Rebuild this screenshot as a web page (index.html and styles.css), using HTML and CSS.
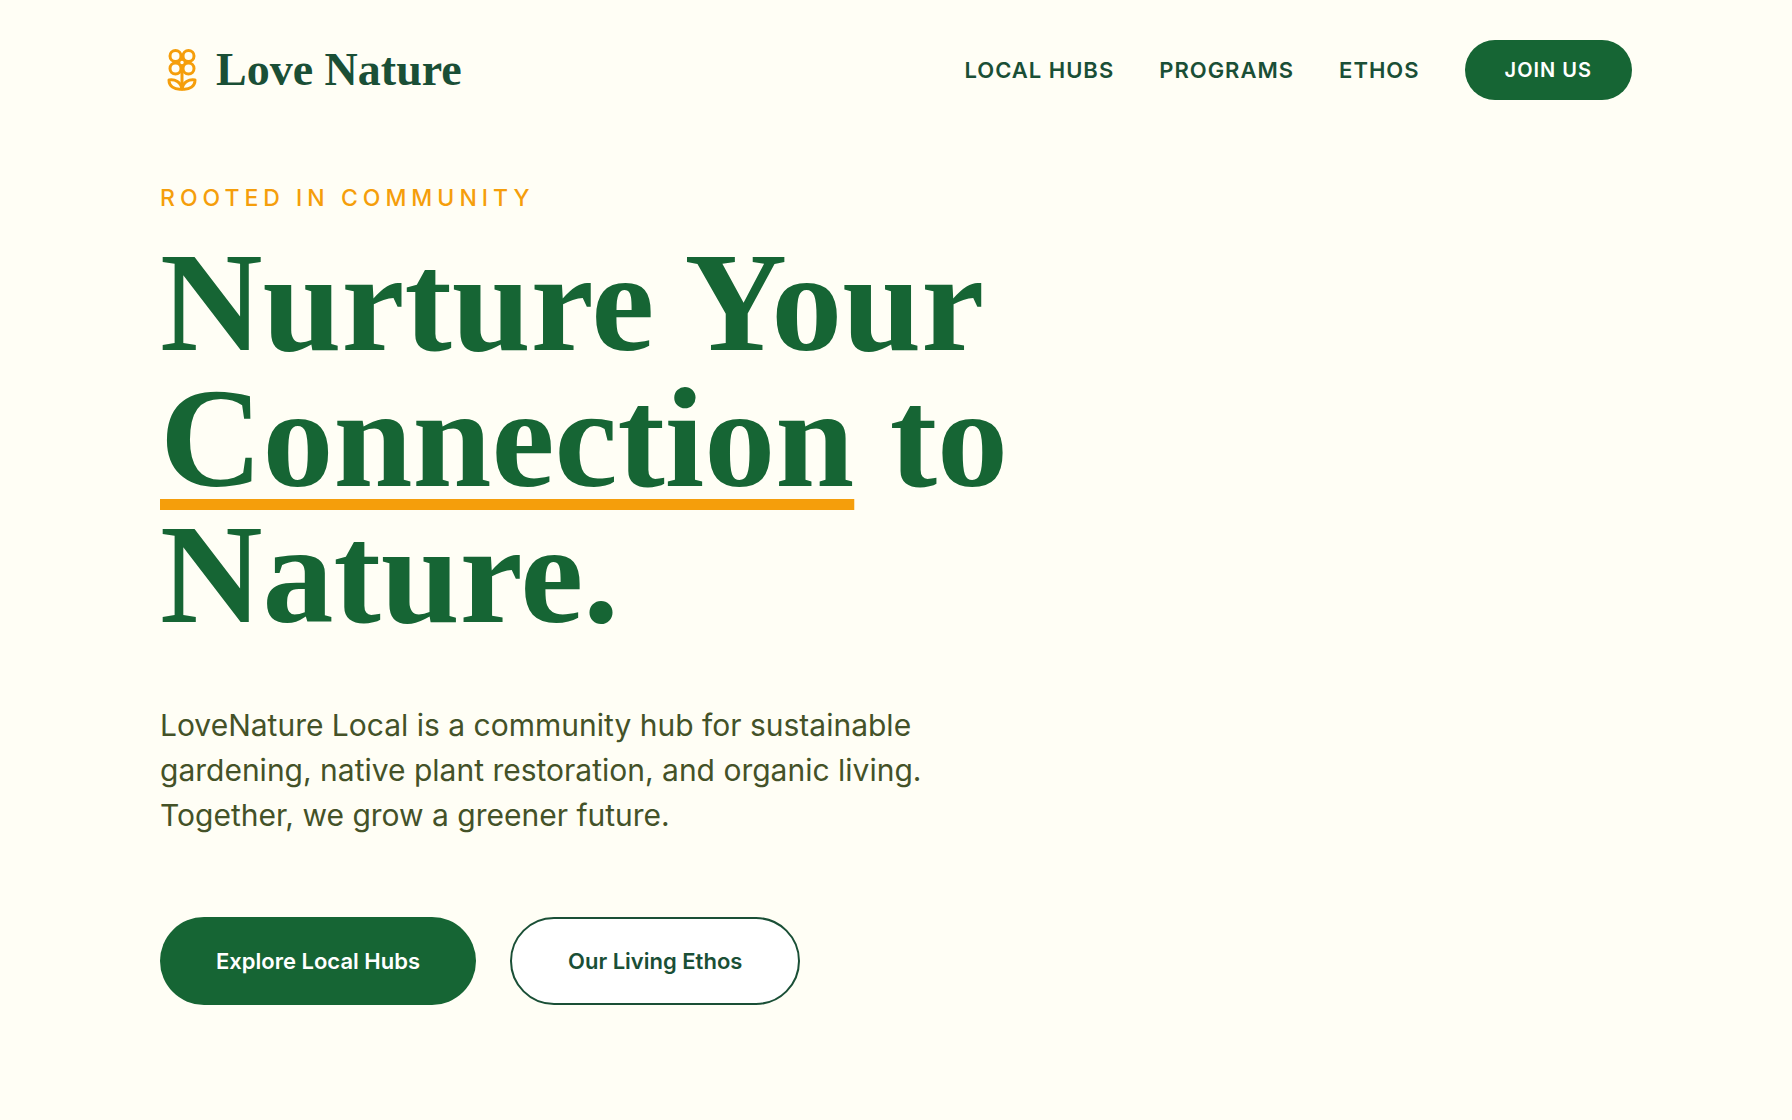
FILE: index.html
```
<!DOCTYPE html>
<html lang="en">
<head>
  <meta charset="UTF-8">
  <meta name="viewport" content="width=device-width, initial-scale=1.0">
  <title>Love Nature</title>
  <link rel="stylesheet" href="styles.css">
</head>
<body>
  <header class="header">
    <a href="#" class="logo">
      <svg class="logo-icon" viewBox="0 0 44 44" fill="none" stroke="currentColor" stroke-width="3" stroke-linecap="round" stroke-linejoin="round" aria-hidden="true">
        <circle cx="15.5" cy="8" r="5.5"/>
        <circle cx="28.5" cy="8" r="5.5"/>
        <circle cx="15.5" cy="20.5" r="5.5"/>
        <circle cx="28.5" cy="20.5" r="5.5"/>
        <circle cx="22" cy="14.5" r="3" fill="#fffef5" stroke-width="2.5"/>
        <path d="M22 22v19"/>
        <path d="M22 41C14 42 9 38 9 32c6-1 12 2 13 9z"/>
        <path d="M22 41c8 1 13-3 13-9-6-1-12 2-13 9z"/>
      </svg>
      <span>Love Nature</span>
    </a>
    <nav class="nav">
      <a href="#hubs">LOCAL HUBS</a>
      <a href="#programs">PROGRAMS</a>
      <a href="#ethos">ETHOS</a>
      <button class="btn-join">JOIN US</button>
    </nav>
  </header>

  <main class="hero">
    <p class="eyebrow">ROOTED IN COMMUNITY</p>
    <h1>Nurture Your <span class="underline">Connection</span> to Nature.</h1>
    <p class="description">LoveNature Local is a community hub for sustainable gardening, native plant restoration, and organic living. Together, we grow a greener future.</p>
    <div class="actions">
      <button class="btn btn-primary">Explore Local Hubs</button>
      <button class="btn btn-outline">Our Living Ethos</button>
    </div>
  </main>
</body>
</html>
```
FILE: styles.css
```
:root {
  --bg-color: #fffef5;
  --green: #166534;
  --dark-green: #1a4f36;
  --amber: #f59e0b;
  --olive: #445228;
  --serif: "Liberation Serif", "Times New Roman", serif;
  --sans: Inter, "Open Sans", sans-serif;
}

* {
  margin: 0;
  padding: 0;
  box-sizing: border-box;
}

body {
  font-family: var(--sans);
  background-color: var(--bg-color);
  color: var(--green);
  min-height: 100vh;
  padding: 40px 160px;
}

.header {
  display: flex;
  justify-content: space-between;
  align-items: center;
}

.logo {
  display: flex;
  align-items: center;
  gap: 12px;
  font-family: var(--serif);
  font-size: 46px;
  font-weight: 700;
  line-height: 60px;
  color: var(--dark-green);
  text-decoration: none;
}

.logo-icon {
  width: 44px;
  height: 44px;
  color: var(--amber);
}

.nav {
  display: flex;
  align-items: center;
  gap: 45px;
}

.nav a {
  color: var(--dark-green);
  font-size: 22px;
  font-weight: 600;
  letter-spacing: 1px;
  text-decoration: none;
}

button {
  font-family: inherit;
  font-size: 22px;
  font-weight: 600;
  border: none;
  cursor: pointer;
}

.btn-join {
  padding: 0 40px;
  height: 60px;
  border-radius: 30px;
  background-color: var(--green);
  color: #fff;
  font-size: 20px;
  letter-spacing: 1px;
}

.hero {
  padding-top: 82px;
}

.eyebrow {
  color: var(--amber);
  font-size: 23px;
  font-weight: 500;
  line-height: 32px;
  letter-spacing: 5px;
}

h1 {
  max-width: 900px;
  margin-top: 20px;
  font-family: var(--serif);
  font-size: 142px;
  font-weight: 700;
  line-height: 136px;
}

.underline {
  text-decoration: underline;
  text-decoration-color: var(--amber);
  text-decoration-thickness: 11px;
  text-underline-offset: 13px;
  text-decoration-skip-ink: none;
}

.description {
  max-width: 800px;
  margin-top: 61px;
  color: var(--olive);
  font-size: 30px;
  line-height: 45px;
}

.actions {
  display: flex;
  flex-wrap: wrap;
  gap: 34px;
  margin-top: 79px;
}

.btn {
  height: 88px;
  padding: 0 56px;
  border-radius: 44px;
}

.btn-primary {
  background-color: var(--green);
  color: #fff;
}

.btn-outline {
  background-color: #fff;
  border: 2px solid var(--dark-green);
  color: var(--dark-green);
}

@media (max-width: 1100px) {
  body {
    padding: 32px 40px;
  }

  .header {
    flex-wrap: wrap;
    gap: 24px;
  }

  h1 {
    font-size: 96px;
    line-height: 100px;
  }
}
```
